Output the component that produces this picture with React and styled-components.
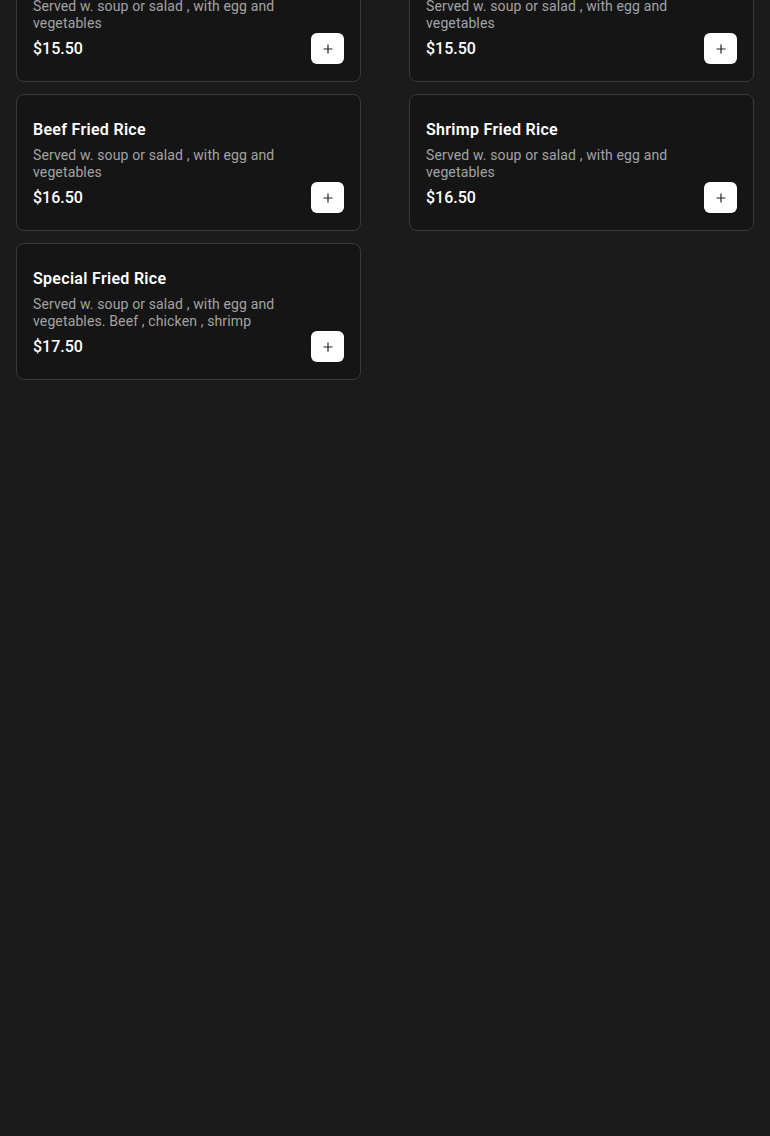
import React from "react";
import styled, { createGlobalStyle } from "styled-components";

const Global = createGlobalStyle`
  html, body { margin: 0; padding: 0; background: #1b1b1b; }
  body { font-family: Roboto, "Liberation Sans", sans-serif; color: #fff; }
  #root { min-height: 1136px; background: #1b1b1b; overflow: hidden; }
`;

const Page = styled.main`
  padding: 0 16px;
  overflow: hidden;
  height: 1136px;
`;

const Grid = styled.div`
  display: grid;
  grid-template-columns: 345px 345px;
  column-gap: 48px;
  row-gap: 12px;
  margin-top: -55px;
`;

const Card = styled.article`
  box-sizing: border-box;
  height: 137px;
  background: #151515;
  border: 1px solid #3a3a3a;
  border-radius: 8px;
  padding: 20px 16px 16px 16px;
  display: flex;
  align-items: flex-end;
  gap: 16px;
`;

const Info = styled.div`
  flex: 1;
  min-width: 0;
  display: flex;
  flex-direction: column;
`;

const Title = styled.h3`
  margin: 0 0 5px;
  font-size: 16px;
  line-height: 24px;
  font-weight: 600;
  letter-spacing: 0.3px;
  color: #fff;
`;

const Desc = styled.p`
  margin: 0 0 1px;
  font-size: 14px;
  line-height: 17px;
  letter-spacing: 0.13px;
  color: #a3a3a3;
`;

const Price = styled.div`
  font-size: 16px;
  font-weight: 500;
  line-height: 32px;
  color: #fff;
`;

const AddButton = styled.button`
  flex: none;
  width: 33px;
  height: 31px;
  margin-bottom: 1px;
  border: none;
  border-radius: 6px;
  background: #fff;
  display: flex;
  align-items: center;
  justify-content: center;
  padding: 0;
  cursor: pointer;
`;

const items = [
  { title: "Chicken Fried Rice", desc: "Served w. soup or salad , with egg and vegetables", price: "$15.50" },
  { title: "Pork Fried Rice", desc: "Served w. soup or salad , with egg and vegetables", price: "$15.50" },
  { title: "Beef Fried Rice", desc: "Served w. soup or salad , with egg and vegetables", price: "$16.50" },
  { title: "Shrimp Fried Rice", desc: "Served w. soup or salad , with egg and vegetables", price: "$16.50" },
  { title: "Special Fried Rice", desc: "Served w. soup or salad , with egg and vegetables. Beef , chicken , shrimp", price: "$17.50" },
];

const Plus = () => (
  <svg width="10" height="10" viewBox="0 0 10 10" fill="none">
    <path d="M5 0.5v9M0.5 5h9" stroke="#222" strokeWidth="1.2" />
  </svg>
);

export default function App() {
  return (
    <>
      <Global />
      <Page>
        <Grid>
          {items.map((it) => (
            <Card key={it.title}>
              <Info>
                <Title>{it.title}</Title>
                <Desc>{it.desc}</Desc>
                <Price>{it.price}</Price>
              </Info>
              <AddButton aria-label={`Add ${it.title}`}>
                <Plus />
              </AddButton>
            </Card>
          ))}
        </Grid>
      </Page>
    </>
  );
}
